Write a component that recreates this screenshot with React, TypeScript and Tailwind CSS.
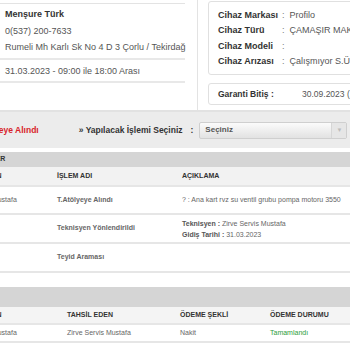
const FONT = "font-['Liberation_Sans',Arial,sans-serif]"

const DEVICE = [
  { label: "Cihaz Markası", value: "Profilo" },
  { label: "Cihaz Türü", value: "ÇAMAŞIR MAKİNESİ" },
  { label: "Cihaz Modeli", value: "" },
  { label: "Cihaz Arızası", value: "Çalışmıyor S.Ü." },
]

export default function App() {
  return (
    <div className={`w-[350px] h-[350px] overflow-hidden bg-white text-[#333] ${FONT}`}>
      {/* müşteri + cihaz bilgisi */}
      <div className="flex h-[110px]">
        <div className="w-[198px] shrink-0 border-r border-[#e3e3e3] pr-[12px]">
          <div className="h-[4px] border-b border-[#e3e3e3]" />
          <div className="pl-[5px] pt-[2px] pb-[2px] text-[9px] leading-[16.5px] border-b-2 border-[#e8e8e8] whitespace-nowrap">
            <p className="font-bold">Menşure Türk</p>
            <p className="text-[#555]">0(537) 200-7633</p>
            <p className="text-[#555]">Rumeli Mh Karlı Sk No 4 D 3 Çorlu / Tekirdağ</p>
          </div>
          <div className="pl-[5px] pt-[3px] pb-[2px] text-[9px] leading-[16px] text-[#555] border-b-2 border-[#e8e8e8]">
            31.03.2023 - 09:00 ile 18:00 Arası
          </div>
        </div>

        <div className="pl-[10px] w-[220px] shrink-0">
          <div className="mt-[1px] h-[74px] border border-[#e0e0e0] rounded-[3px] pl-[9px] pt-[6px] text-[9px] leading-[15.3px] whitespace-nowrap">
            {DEVICE.map((d) => (
              <div key={d.label} className="flex">
                <span className="w-[64px] shrink-0 font-bold">{d.label}</span>
                <span className="text-[#777]">:</span>
                <span className="ml-[5px] text-[#555]">{d.value}</span>
              </div>
            ))}
          </div>
          <div className="mt-[8px] h-[22px] border border-[#e0e0e0] rounded-[3px] pl-[9px] flex items-center text-[8.5px] whitespace-nowrap">
            <span className="w-[84px] shrink-0 font-bold">Garanti Bitiş :</span>
            <span className="text-[#555]">30.09.2023 (1 Yıl)</span>
          </div>
        </div>
      </div>

      {/* işlem seçimi */}
      <div className="h-[38px] bg-[#ececec] border-t-2 border-[#e2e2e2] overflow-hidden">
        <div className="-ml-[29px] h-full flex items-center whitespace-nowrap text-[8.5px] font-bold">
          <span className="text-[#d8232a]">T.Atölyeye Alındı</span>
          <span className="ml-[40px]">» Yapılacak İşlemi Seçiniz</span>
          <span className="ml-[8px]">:</span>
          <div className="ml-[6px] w-[148px] h-[17px] shrink-0 flex border border-[#cfcfcf] rounded-[2px] bg-gradient-to-b from-[#fbfbfb] to-[#e2e2e2]">
            <span className="flex-1 pl-[5px] flex items-center text-[8px] text-[#555]">Seçiniz</span>
            <span className="w-[15px] flex items-center justify-center bg-[#e6e6e6] border-l border-[#d6d6d6] text-[6px] text-[#bbb]">▼</span>
          </div>
        </div>
      </div>

      <div className="h-[4px]" />

      {/* işlemler */}
      <div className="-ml-[52px] w-[420px] text-[7px]">
        <div className="h-[15px] bg-[#d5d5d5] pl-[22px] flex items-center font-bold">İŞLEMLER</div>
        <div className="grid grid-cols-[104px_125px_1fr] h-[18px] items-center bg-[#f2f2f2] font-bold">
          <span className="pl-[5px]">İŞLEMİ YAPAN</span>
          <span className="pl-[5px]">İŞLEM ADI</span>
          <span className="pl-[5px]">AÇIKLAMA</span>
        </div>
        <div className="border-b-2 border-[#e6e6e6]">
          <div className="grid grid-cols-[104px_125px_1fr] h-[28px] items-center border-t-2 border-[#e6e6e6] text-[#666]">
            <span className="pl-[5px]">Zirve Servis Mustafa</span>
            <span className="pl-[5px] font-bold">T.Atölyeye Alındı</span>
            <span className="pl-[5px]">? : Ana kart rvz su ventil grubu pompa motoru 3550</span>
          </div>
          <div className="grid grid-cols-[104px_125px_1fr] h-[29px] items-center border-t-2 border-[#e6e6e6] text-[#666]">
            <span className="pl-[5px]" />
            <span className="pl-[5px] font-bold">Teknisyen Yönlendirildi</span>
            <div className="pl-[5px] leading-[11px]">
              <p><b className="text-[#555]">Teknisyen :</b> Zirve Servis Mustafa</p>
              <p><b className="text-[#555]">Gidiş Tarihi :</b> 31.03.2023</p>
            </div>
          </div>
          <div className="grid grid-cols-[104px_125px_1fr] h-[29px] items-center border-t-2 border-[#e6e6e6] text-[#666]">
            <span className="pl-[5px]" />
            <span className="pl-[5px] font-bold">Teyid Araması</span>
            <span className="pl-[5px]" />
          </div>
        </div>

        {/* tahsilat */}
        <div className="mt-[14px] h-[20px] bg-[#d5d5d5] pl-[22px] flex items-center font-bold">ÖDEME</div>
        <div className="grid grid-cols-[114px_113px_90px_1fr] h-[16px] items-center bg-[#f4f4f4] font-bold">
          <span className="pl-[5px]">İŞLEMİ YAPAN</span>
          <span className="pl-[5px]">TAHSİL EDEN</span>
          <span className="pl-[5px]">ÖDEME ŞEKLİ</span>
          <span className="pl-[5px]">ÖDEME DURUMU</span>
        </div>
        <div className="grid grid-cols-[114px_113px_90px_1fr] h-[20px] items-center border-y-2 border-[#e6e6e6] text-[#666]">
          <span className="pl-[5px]">Zirve Servis Mustafa</span>
          <span className="pl-[5px]">Zirve Servis Mustafa</span>
          <span className="pl-[5px]">Nakit</span>
          <span className="pl-[5px] text-[#2e9d3a]">Tamamlandı</span>
        </div>
      </div>
    </div>
  )
}
